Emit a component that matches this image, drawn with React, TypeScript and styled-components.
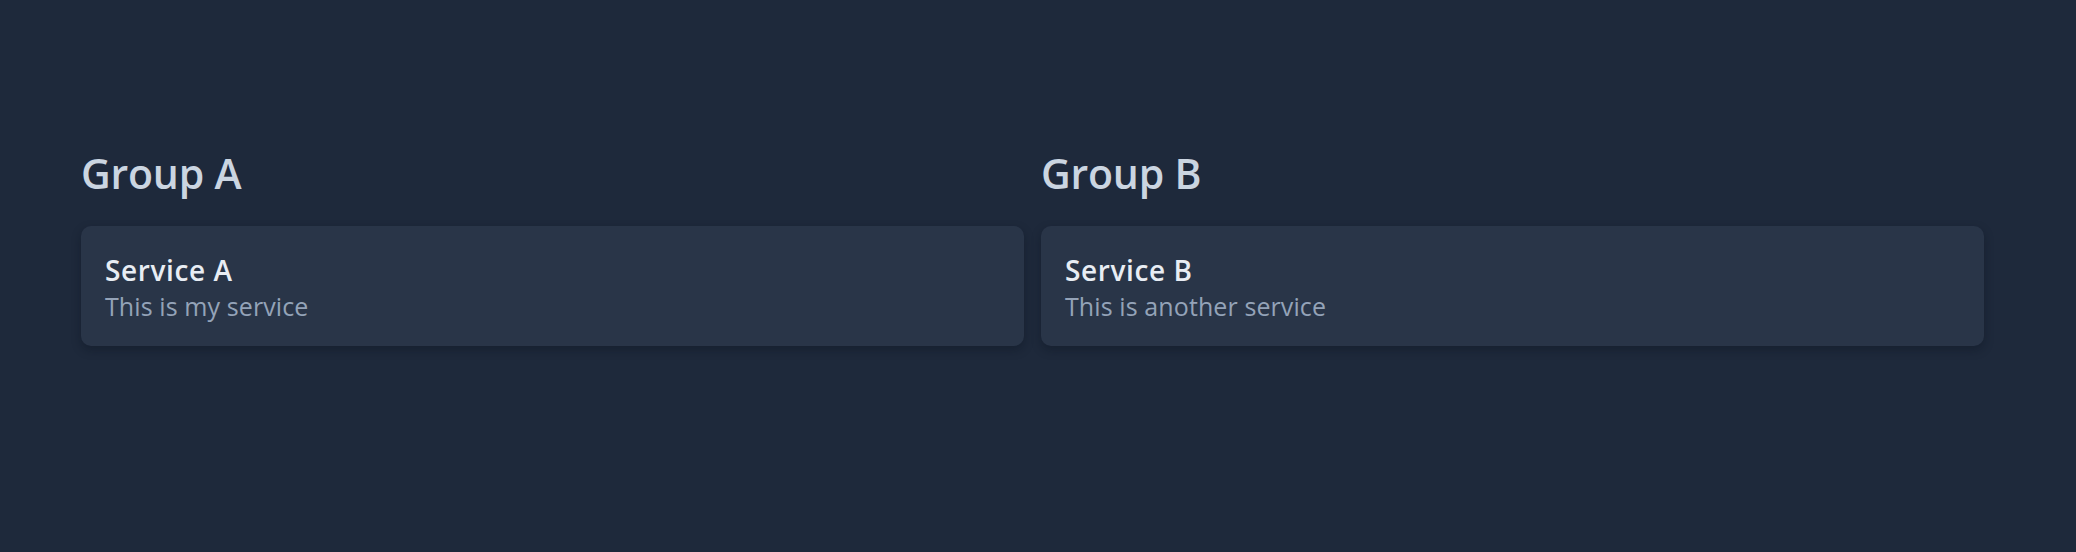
import React from "react";
import styled, { createGlobalStyle } from "styled-components";

const Global = createGlobalStyle`
  html, body { margin: 0; padding: 0; background: #1e293b; }
  body { font-family: "Open Sans", "Noto Sans", sans-serif; }
`;

const Page = styled.div`
  min-height: 552px;
  box-sizing: border-box;
  padding: 144px 92px 0 81px;
  background: #1e293b;
`;

const Groups = styled.div`
  display: grid;
  grid-template-columns: 1fr 1fr;
  column-gap: 17px;
`;

const Group = styled.section`
  display: flex;
  flex-direction: column;
`;

const GroupTitle = styled.h2`
  margin: 0 0 24px 0;
  font-size: 41px;
  line-height: 58px;
  font-weight: 600;
  color: #cbd5e1;
  letter-spacing: -0.2px;
`;

const Card = styled.div`
  background: #293548;
  border-radius: 10px;
  box-shadow: 0 4px 10px rgba(10, 16, 30, 0.35);
  padding: 27px 24px 23px 24px;
  display: flex;
  flex-direction: column;
  gap: 2px;
`;

const ServiceName = styled.div`
  font-size: 28px;
  line-height: 34px;
  font-weight: 600;
  letter-spacing: 0.6px;
  color: #e8edf4;
`;

const ServiceDesc = styled.div`
  font-size: 25px;
  line-height: 34px;
  font-weight: 400;
  letter-spacing: 0.1px;
  color: #94a3b8;
`;

const groups = [
  { name: "Group A", service: "Service A", desc: "This is my service" },
  { name: "Group B", service: "Service B", desc: "This is another service" },
];

export default function App() {
  return (
    <>
      <Global />
      <Page>
        <Groups>
          {groups.map((g) => (
            <Group key={g.name}>
              <GroupTitle>{g.name}</GroupTitle>
              <Card>
                <ServiceName>{g.service}</ServiceName>
                <ServiceDesc>{g.desc}</ServiceDesc>
              </Card>
            </Group>
          ))}
        </Groups>
      </Page>
    </>
  );
}
